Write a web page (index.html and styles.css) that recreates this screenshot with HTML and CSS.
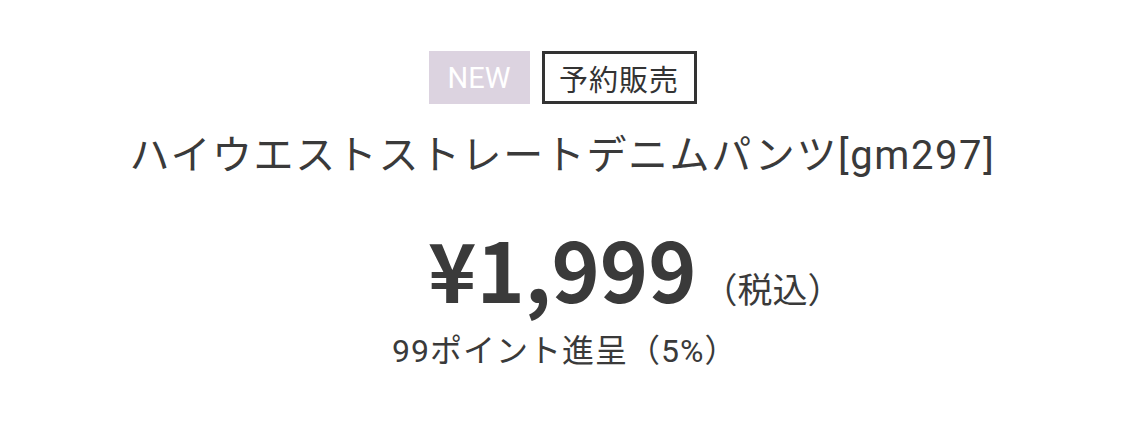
FILE: index.html
```html
<!DOCTYPE html>
<html lang="ja">
<head>
<meta charset="utf-8">
<link rel="stylesheet" href="styles.css">
</head>
<body>
<div class="product">
  <div class="badges">
    <span class="badge badge-new">NEW</span>
    <span class="badge badge-pre">予約販売</span>
  </div>
  <h1 class="title">ハイウエストストレートデニムパンツ[gm297]</h1>
  <div class="pricing">
    <div class="price-row">
      <span class="price">¥1,999</span>
      <span class="tax">（税込）</span>
    </div>
    <div class="points">99ポイント進呈（5%）</div>
  </div>
</div>
</body>
</html>
```
FILE: styles.css
```css
html, body {
  margin: 0;
  padding: 0;
  background: #ffffff;
}
body {
  font-family: "Roboto", "Noto Sans CJK JP", sans-serif;
  color: #3a3a3a;
  width: 1125px;
  height: 421px;
  overflow: hidden;
}
.product {
  display: flex;
  flex-direction: column;
  align-items: center;
  padding-top: 51px;
}
.badges {
  display: flex;
  gap: 12px;
}
.badge {
  box-sizing: border-box;
  height: 53px;
  display: flex;
  align-items: center;
  justify-content: center;
  font-size: 29px;
}
.badge-new {
  width: 101px;
  background: #dcd3e0;
  color: #ffffff;
}
.badge-pre {
  width: 155px;
  border: 3px solid #333333;
  color: #333333;
  letter-spacing: 1px;
}
.title {
  margin: 23px 0 0;
  font-weight: 400;
  font-size: 40px;
  letter-spacing: 1.6px;
  line-height: 58px;
  color: #3a3a3a;
}
.pricing {
  align-self: flex-start;
  margin-left: 392px;
  margin-top: 40px;
}
.price-row {
  display: flex;
  align-items: baseline;
  margin-left: 36px;
  height: 86px;
}
.price {
  font-family: "Noto Sans CJK JP", sans-serif;
  font-weight: 700;
  font-size: 82px;
  line-height: 86px;
  color: #3a3a3a;
}
.tax {
  font-family: "Noto Sans CJK JP", sans-serif;
  font-size: 35px;
  margin-left: 6px;
}
.points {
  font-size: 32px;
  letter-spacing: 1px;
  line-height: 44px;
  margin-top: 18px;
}
```
